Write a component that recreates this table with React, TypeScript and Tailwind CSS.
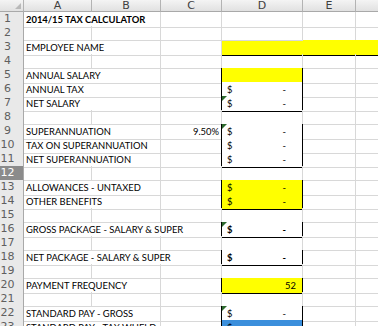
import React from 'react';

type DCell = {
  kind: 'box' | 'yellow' | 'blue';
  money?: boolean;
  value?: string;
  flag?: boolean;
  bold?: boolean;
};

type Row = {
  n: number;
  label?: string;
  bold?: boolean;
  span?: 1 | 2 | 3;
  c?: string;
  d?: DCell;
  strip?: boolean;
};

const ROWS: Row[] = [
  { n: 1, label: '2014/15 TAX CALCULATOR', bold: true, span: 2 },
  { n: 2 },
  { n: 3, label: 'EMPLOYEE NAME', span: 2, strip: true },
  { n: 4 },
  { n: 5, label: 'ANNUAL SALARY', span: 2, d: { kind: 'yellow' } },
  { n: 6, label: 'ANNUAL TAX', span: 2, d: { kind: 'box', money: true } },
  { n: 7, label: 'NET SALARY', span: 2, d: { kind: 'box', money: true, flag: true } },
  { n: 8 },
  { n: 9, label: 'SUPERANNUATION', span: 2, c: '9.50%', d: { kind: 'box', money: true, flag: true } },
  { n: 10, label: 'TAX ON SUPERANNUATION', span: 2, d: { kind: 'box', money: true } },
  { n: 11, label: 'NET SUPERANNUATION', span: 2, d: { kind: 'box', money: true } },
  { n: 12 },
  { n: 13, label: 'ALLOWANCES - UNTAXED', span: 2, d: { kind: 'yellow', money: true } },
  { n: 14, label: 'OTHER BENEFITS', span: 2, d: { kind: 'yellow', money: true } },
  { n: 15 },
  { n: 16, label: 'GROSS PACKAGE - SALARY & SUPER', span: 3, d: { kind: 'box', money: true, flag: true, bold: true } },
  { n: 17 },
  { n: 18, label: 'NET PACKAGE - SALARY & SUPER', span: 3, d: { kind: 'box', money: true, bold: true } },
  { n: 19 },
  { n: 20, label: 'PAYMENT FREQUENCY', span: 2, d: { kind: 'yellow', value: '52' } },
  { n: 21 },
  { n: 22, label: 'STANDARD PAY - GROSS', span: 2, d: { kind: 'box', money: true, flag: true } },
  { n: 23, label: 'STANDARD PAY - TAX WHELD', span: 2, d: { kind: 'blue', money: true } },
];

const GRID = 'grid grid-cols-[24px_68px_69px_61px_81px_53px_1fr]';
const SELECTED_ROW = 12;

const SPAN: Record<number, string> = {
  1: 'col-span-1',
  2: 'col-span-2',
  3: 'col-span-3',
};

const FILL: Record<DCell['kind'], string> = {
  box: 'bg-white',
  yellow: 'bg-[#ffff00]',
  blue: 'bg-[#3b8fdc]',
};

function Flag() {
  return (
    <span className="absolute left-0 top-0 h-0 w-0 border-t-[5px] border-r-[5px] border-t-[#2d6a2d] border-r-transparent" />
  );
}

function DValue({ d }: { d: DCell }) {
  if (d.money) {
    return (
      <div className={`flex justify-between pl-[5px] pr-[16px] ${d.bold ? 'font-bold' : ''}`}>
        <span>$</span>
        <span>-</span>
      </div>
    );
  }
  if (d.value) {
    return <div className="pr-[6px] text-right">{d.value}</div>;
  }
  return null;
}

function SheetRow({ row, next }: { row: Row; next?: Row }) {
  const boxed = !!row.d;
  const span = row.span ?? 1;
  const selected = row.n === SELECTED_ROW;

  const gridB = 'border-b-[#d8d8d8]';
  const gridR = 'border-r-[#d8d8d8]';
  const leftOfD = boxed ? 'border-r-black' : gridR;
  const dBottom = boxed || next?.d ? 'border-b-black' : gridB;
  const dRight = boxed ? 'border-r-black' : gridR;

  return (
    <div className={`${GRID} h-[14px]`}>
      <div
        className={`border-r border-b border-r-[#a9a9a9] pr-[8px] text-center font-['DejaVu_Sans',sans-serif] text-[11px] leading-[14px] ${
          selected ? 'border-b-[#7a7a7a] bg-[#8b8b8b] text-white' : 'border-b-[#c6c6c6] bg-[#e9e9e9] text-[#5f5f5f]'
        }`}
      >
        {row.n}
      </div>

      <div
        className={`${SPAN[span]} border-r border-b ${span === 3 ? leftOfD : gridR} ${gridB} whitespace-nowrap pl-[2px] ${
          row.bold ? 'font-bold' : ''
        }`}
      >
        {row.label}
      </div>

      {span === 1 && <div className={`border-r border-b ${gridR} ${gridB}`} />}
      {span < 3 && (
        <div className={`border-r border-b ${leftOfD} ${gridB} pr-[2px] text-right`}>{row.c}</div>
      )}

      {row.strip ? (
        // input band for the employee name runs from D to the edge
        <div className="col-span-3 border-b border-b-black bg-[#ffff00]" />
      ) : (
        <>
          <div className={`relative border-r border-b ${dRight} ${dBottom} ${row.d ? FILL[row.d.kind] : ''}`}>
            {row.d?.flag && <Flag />}
            {row.d && <DValue d={row.d} />}
          </div>
          <div className={`border-r border-b ${gridR} ${gridB}`} />
          <div className={`border-b ${gridB}`} />
        </>
      )}
    </div>
  );
}

function ColumnHeader() {
  const cell =
    'border-r border-b border-r-[#b3b3b3] border-b-[#a9a9a9] bg-gradient-to-b from-[#f4f4f4] to-[#e1e1e1] text-center';
  return (
    <div className={`${GRID} h-[12px] font-['DejaVu_Sans',sans-serif] text-[11px] leading-[11px] text-[#3f3f3f]`}>
      <div className={`${cell} relative`}>
        <span className="absolute bottom-[2px] right-[2px] h-0 w-0 border-b-[6px] border-l-[6px] border-b-[#b9b9b9] border-l-transparent" />
      </div>
      <div className={cell}>A</div>
      <div className={cell}>B</div>
      <div className={cell}>C</div>
      <div className={cell}>D</div>
      <div className={cell}>E</div>
      <div className={`${cell} border-r-0`} />
    </div>
  );
}

export default function App() {
  return (
    <div className="h-[326px] w-[378px] overflow-hidden bg-white font-['Lato',sans-serif] text-[9.4px] leading-[15px] text-black">
      <ColumnHeader />
      {ROWS.map((row, i) => (
        <SheetRow key={row.n} row={row} next={ROWS[i + 1]} />
      ))}
    </div>
  );
}
